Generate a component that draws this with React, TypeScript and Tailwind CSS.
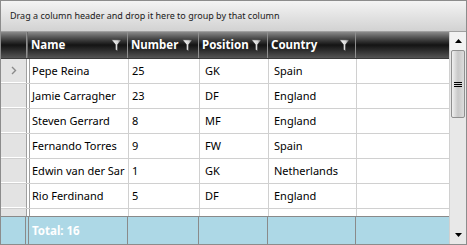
import React from 'react'

const players = [
  { name: 'Pepe Reina', number: '25', position: 'GK', country: 'Spain' },
  { name: 'Jamie Carragher', number: '23', position: 'DF', country: 'England' },
  { name: 'Steven Gerrard', number: '8', position: 'MF', country: 'England' },
  { name: 'Fernando Torres', number: '9', position: 'FW', country: 'Spain' },
  { name: 'Edwin van der Sar', number: '1', position: 'GK', country: 'Netherlands' },
  { name: 'Rio Ferdinand', number: '5', position: 'DF', country: 'England' },
]

function Funnel() {
  return (
    <svg width="11" height="13" viewBox="0 0 11 13" className="shrink-0">
      <defs>
        <linearGradient id="fg" x1="0" x2="1" y1="0" y2="0">
          <stop offset="0" stopColor="#ffffff" />
          <stop offset="0.6" stopColor="#d8d8d8" />
          <stop offset="1" stopColor="#7a7a7a" />
        </linearGradient>
      </defs>
      <path d="M0.5 0.8h10L6.6 5.6v6.6L4.4 10.6V5.6z" fill="url(#fg)" stroke="#2a2a2a" strokeWidth="0.6" />
    </svg>
  )
}

function HeaderCell({ label, w }: { label: string; w: string }) {
  return (
    <div className={`${w} h-full flex items-center justify-between pl-[3px] pr-[5px] border-r border-[#8e8e8e] shrink-0`}>
      <span className="text-white font-bold text-[11.5px] leading-none">{label}</span>
      <Funnel />
    </div>
  )
}

export default function App() {
  return (
    <div
      className="w-[467px] h-[245px] border border-[#8c8c8c] bg-white flex flex-col overflow-hidden"
      style={{ fontFamily: '"Noto Sans", "Open Sans", sans-serif' }}
    >
      <div className="h-[31px] shrink-0 flex items-center pl-[9px] bg-gradient-to-b from-[#f4f4f4] to-[#d2d2d2] border-b border-[#a0a0a0]">
        <span className="text-[9px] text-[#1a1a1a]">Drag a column header and drop it here to group by that column</span>
      </div>

      <div className="flex-1 flex min-h-0">
        <div className="flex-1 flex flex-col min-w-0">
          {/* header */}
          <div className="h-[27px] shrink-0 flex bg-gradient-to-b from-[#8a8a8a] via-[#141414] to-[#555555] border-b border-[#3a3a3a]">
            <div className="w-[26px] h-full border-r border-[#8e8e8e] shrink-0" />
            <div className="w-[1px] h-full bg-[#6a6a6a] shrink-0" />
            <HeaderCell label="Name" w="w-[100px]" />
            <HeaderCell label="Number" w="w-[71px]" />
            <HeaderCell label="Position" w="w-[69px]" />
            <HeaderCell label="Country" w="w-[88px]" />
            <div className="flex-1" />
          </div>

          {/* rows */}
          <div className="flex-1 overflow-hidden">
            {[...players, null].map((p, i) => (
              <div key={i} className="h-[25px] flex border-b border-[#d0d0d0]">
                <div className="w-[25px] h-full shrink-0 bg-[#e3e3e3] border-b border-white flex items-center justify-center">
                  {i === 0 && (
                    <svg width="6" height="9" viewBox="0 0 6 9">
                      <path d="M1 1l3.5 3.5L1 8" fill="none" stroke="#8a8a8a" strokeWidth="1.4" />
                    </svg>
                  )}
                </div>
                <div className="w-[1px] bg-[#a0a0a0] shrink-0" />
                <div className="w-[2px] bg-white shrink-0" />
                <div className="w-[1px] bg-[#a0a0a0] shrink-0" />
                <div className="w-[99px] h-full pl-[2px] flex items-center border-r border-[#d0d0d0] shrink-0 text-[11px] text-black whitespace-nowrap overflow-hidden">
                  {p?.name}
                </div>
                <div className="w-[71px] h-full pl-[3px] flex items-center border-r border-[#d0d0d0] shrink-0 text-[11px] text-black">
                  {p?.number}
                </div>
                <div className="w-[69px] h-full pl-[5px] flex items-center border-r border-[#d0d0d0] shrink-0 text-[11px] text-black">
                  {p?.position}
                </div>
                <div className="w-[88px] h-full pl-[5px] flex items-center border-r border-[#d0d0d0] shrink-0 text-[11px] text-black">
                  {p?.country}
                </div>
                <div className="flex-1" />
              </div>
            ))}
          </div>

          {/* footer */}
          <div className="h-[28px] shrink-0 flex bg-[#add8e6] border-t border-[#8a8a8a]">
            <div className="w-[25px] h-full border-r border-[#8a8a8a] shrink-0" />
            <div className="w-[2px] shrink-0" />
            <div className="w-[1px] bg-[#8a8a8a] shrink-0" />
            <div className="w-[99px] h-full pl-[3px] flex items-center border-r border-[#8a8a8a] shrink-0 text-white font-bold text-[11.5px]">
              Total: 16
            </div>
            <div className="w-[71px] h-full border-r border-[#8a8a8a] shrink-0" />
            <div className="w-[69px] h-full border-r border-[#8a8a8a] shrink-0" />
            <div className="w-[88px] h-full border-r border-[#8a8a8a] shrink-0" />
            <div className="flex-1" />
          </div>
        </div>

        {/* scrollbar */}
        <div className="w-[17px] shrink-0 bg-[#e8e8e8] border-l border-[#d0d0d0] flex flex-col">
          <div className="h-[18px] flex items-center justify-center bg-[#f2f2f2]">
            <svg width="7" height="4" viewBox="0 0 7 4"><path d="M0 4L3.5 0L7 4z" fill="#000" /></svg>
          </div>
          <div className="h-[68px] mx-[1px] border border-[#8f8f8f] rounded-[2px] bg-gradient-to-r from-[#f0f0f0] via-[#c8c8c8] to-[#dcdcdc] flex items-center justify-center">
            <div className="flex flex-col gap-[1px]">
              <div className="w-[8px] h-[1px] bg-black" />
              <div className="w-[8px] h-[1px] bg-black" />
              <div className="w-[8px] h-[1px] bg-black" />
            </div>
          </div>
          <div className="flex-1" />
          <div className="h-[18px] flex items-center justify-center">
            <svg width="7" height="4" viewBox="0 0 7 4"><path d="M0 0L3.5 4L7 0z" fill="#000" /></svg>
          </div>
        </div>
      </div>
    </div>
  )
}
